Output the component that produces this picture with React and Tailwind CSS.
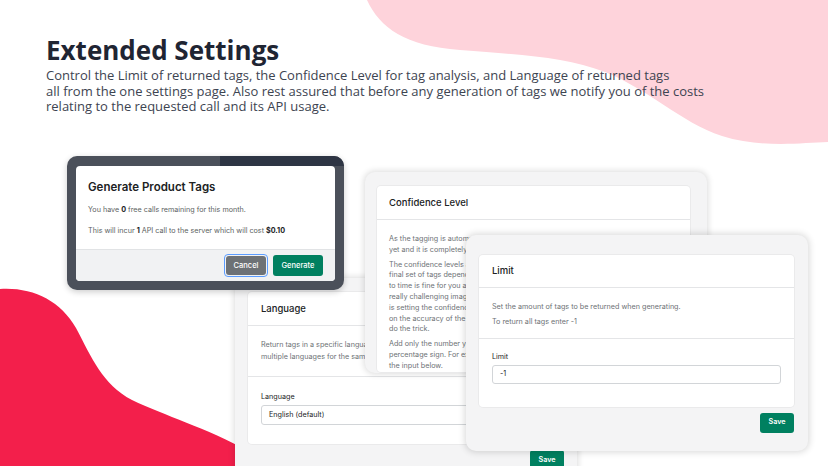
export default function App() {
  return (
    <div className="relative h-[466px] w-[828px] overflow-hidden bg-white font-['Inter',sans-serif]">
      {/* decorative blobs */}
      <svg className="absolute inset-0" width="828" height="466" viewBox="0 0 828 466">
        <path
          d="M367 0 C380 28 405 46 460 50 C525 55 565 57 605 72 C650 90 680 122 722 136 C760 148 800 143 828 142 L828 0 Z"
          fill="#fed3db"
        />
        <path
          d="M0 289 C32 287 60 300 76 328 C92 358 102 384 132 400 C165 416 205 427 250 452 L250 466 L0 466 Z"
          fill="#f31f4b"
        />
      </svg>

      <header className="relative px-[46px] pt-[34px] font-['Open_Sans',sans-serif]">
        <h1 className="text-[26px] font-bold leading-[32px] text-[#1f2533]">Extended Settings</h1>
        <p className="mt-[2px] text-[13px] leading-[15.5px] text-[#3d4451]">
          Control the Limit of returned tags, the Confidence Level for tag analysis, and Language of returned tags
          <br />
          all from the one settings page. Also rest assured that before any generation of tags we notify you of the costs
          <br />
          relating to the requested call and its API usage.
        </p>
      </header>

      {/* Language settings window */}
      <div className="absolute left-[235px] top-[278px] h-[200px] w-[342px] rounded-[10px] bg-[#f4f4f5] px-[13px] pt-[14px] shadow-[0_0_6px_1px_rgba(0,0,0,0.14)]">
        <div className="w-[316px] rounded-[4px] bg-white shadow-[0_0_0_1px_rgba(0,0,0,0.04)]">
          <div className="flex h-[34px] items-center border-b border-[#e4e5e7] px-[13px] pt-[2px] text-[9.5px] font-medium text-[#202223]">
            Language
          </div>
          <div className="border-b border-[#e4e5e7] px-[13px] pt-[13px] pb-[14px] text-[7.2px] leading-[11.5px] text-[#6d7175]">
            Return tags in a specific language. Currently it is not possible to return tags in
            <br />
            multiple languages for the same product.
          </div>
          <div className="h-[67px] px-[13px] pt-[15px]">
            <div className="text-[7.2px] leading-[10px] text-[#202223]">Language</div>
            <div className="mt-[3px] flex h-[20px] items-center rounded-[3px] border border-[#d2d5d8] px-[7px] text-[7.2px] text-[#202223]">
              English (default)
            </div>
          </div>
        </div>
        <div className="mt-[6px] flex justify-end">
          <div className="flex h-[20px] w-[34px] items-center justify-center rounded-[3px] bg-[#008060] text-[7.2px] font-semibold text-white">
            Save
          </div>
        </div>
      </div>

      {/* Generate modal window */}
      <div className="absolute left-[67px] top-[156px] h-[134px] w-[277px] overflow-hidden rounded-[10px] bg-[#4b505a] pt-[10px] pr-[9px] pb-[9px] pl-[9px] shadow-[0_2px_6px_rgba(0,0,0,0.2)]">
        <div className="absolute top-0 right-0 left-[153px] h-[10px] bg-[#2e3544]" />
        <div className="relative flex h-full flex-col overflow-hidden rounded-[4px] bg-white">
          <div className="flex-1 px-[12px] pt-[14px]">
            <div className="text-[11.5px] font-semibold leading-[14px] text-[#202223]">Generate Product Tags</div>
            <p className="mt-[11px] text-[7.2px] leading-[10px] text-[#5c5f62]">
              You have <b className="font-bold text-[#202223]">0</b> free calls remaining for this month.
            </p>
            <p className="mt-[11px] text-[7.2px] leading-[10px] text-[#5c5f62]">
              This will incur <b className="font-bold text-[#202223]">1</b> API call to the server which will cost{' '}
              <b className="font-bold text-[#202223]">$0.10</b>
            </p>
          </div>
          <div className="flex h-[32px] items-center justify-end gap-[5px] border-t border-[#e1e3e5] bg-[#f1f2f3] pr-[12px]">
            <div className="rounded-[4px] border-[1.5px] border-[#5b9cff] p-[1px]">
              <div className="flex h-[19px] w-[40px] items-center justify-center rounded-[3px] bg-[#6d7175] text-[7.5px] font-medium text-white">
                Cancel
              </div>
            </div>
            <div className="flex h-[21px] w-[50px] items-center justify-center rounded-[3px] bg-[#008060] text-[7.5px] font-medium text-white">
              Generate
            </div>
          </div>
        </div>
      </div>

      {/* Confidence level window */}
      <div className="absolute left-[365px] top-[172px] h-[201px] w-[342px] overflow-hidden rounded-[10px] bg-[#f4f4f5] pl-[12px] pt-[14px] shadow-[0_0_6px_1px_rgba(0,0,0,0.14)]">
        <div className="w-[313px] rounded-[4px] bg-white shadow-[0_0_0_1px_rgba(0,0,0,0.04)]">
          <div className="flex h-[34px] items-center border-b border-[#e4e5e7] px-[12px] pt-[2px] text-[9.5px] font-medium text-[#202223]">
            Confidence Level
          </div>
          <div className="flex flex-col gap-[4px] px-[12px] pt-[14px] text-[7.2px] leading-[10.8px] whitespace-nowrap text-[#6d7175]">
            <p>
              As the tagging is automated using machine learning, there is no perfect accuracy rating
              <br />
              yet and it is completely dependent on the quality of the product images provided.
            </p>
            <p>
              The confidence levels are a percentage of how sure the tagging service is, so your
              <br />
              final set of tags depends on this value. If getting a few less relevant tags from time
              <br />
              to time is fine for you and your store, a lower level will work, but if you have
              <br />
              really challenging images and only want relevant tags, the best approach
              <br />
              is setting the confidence level a bit higher. If you would rather focus less
              <br />
              on the accuracy of the tags, then a value such as 30 or 40 should generally
              <br />
              do the trick.
            </p>
            <p>
              Add only the number you want as the confidence level, without including the
              <br />
              percentage sign. For example, to set the level at 50%, enter 50 into
              <br />
              the input below.
            </p>
          </div>
        </div>
      </div>

      {/* Limit window */}
      <div className="absolute left-[466px] top-[235px] h-[216px] w-[342px] rounded-[10px] bg-[#f4f4f5] pl-[13px] pt-[20px] shadow-[0_0_7px_1px_rgba(0,0,0,0.16)]">
        <div className="w-[315px] rounded-[4px] bg-white shadow-[0_0_0_1px_rgba(0,0,0,0.04)]">
          <div className="flex h-[33px] items-center border-b border-[#e4e5e7] px-[13px] pt-[1px] text-[9.5px] font-medium text-[#202223]">
            Limit
          </div>
          <div className="flex flex-col gap-[4px] border-b border-[#e4e5e7] px-[13px] pt-[14px] pb-[10px] text-[7.2px] leading-[10.8px] text-[#6d7175]">
            <p>Set the amount of tags to be returned when generating.</p>
            <p>To return all tags enter -1</p>
          </div>
          <div className="h-[68px] px-[13px] pt-[13px]">
            <div className="text-[7.2px] leading-[10px] text-[#202223]">Limit</div>
            <div className="mt-[3px] flex h-[19px] items-center rounded-[3px] border border-[#d2d5d8] px-[7px] text-[7.2px] text-[#202223]">
              -1
            </div>
          </div>
        </div>
        <div className="mt-[6px] flex w-[315px] justify-end">
          <div className="flex h-[20px] w-[34px] items-center justify-center rounded-[3px] bg-[#008060] text-[7.2px] font-semibold text-white">
            Save
          </div>
        </div>
      </div>
    </div>
  );
}
